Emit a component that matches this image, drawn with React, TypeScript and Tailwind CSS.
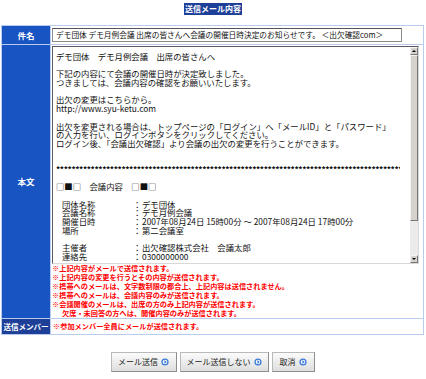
const font = "font-['Noto_Sans_CJK_JP','Noto_Sans_CJK_SC',sans-serif]";

const bodyLines = [
  'デモ団体　デモ月例会議　出席の皆さんへ',
  '',
  '下記の内容にて会議の開催日時が決定致しました。',
  'つきましては、会議内容の確認をお願いいたします。',
  '',
  '出欠の変更はこちらから。',
  'http://www.syu-ketu.com',
  '',
  '出欠を変更される場合は、トップページの「ログイン」へ「メールID」と「パスワード」',
  'の入力を行い、ログインボタンをクリックしてください。',
  'ログイン後、「会議出欠確認」より会議の出欠の変更を行うことができます。',
  '',
  '',
];

const details: [string, string][] = [
  ['団体名称', 'デモ団体'],
  ['会議名称', 'デモ月例会議'],
  ['開催日時', '2007年08月24日 15時00分 ～ 2007年08月24日 17時00分'],
  ['場所', '第二会議室'],
];

const notes = [
  '※上記内容がメールで送信されます。',
  '※上記内容の変更を行うとその内容が送信されます。',
  '※携帯へのメールは、文字数制限の都合上、上記内容は送信されません。',
  '※携帯へのメールは、会議内容のみが送信されます。',
  '※会議開催のメールは、出席の方のみ上記内容が送信されます。',
];

function Row({ k, v }: { k: string; v: string }) {
  return (
    <div className="flex h-[8.7px] items-center pl-[6px]">
      <span className="w-[71px]">{k}</span>
      <span className="w-[9px]">：</span>
      <span>{v}</span>
    </div>
  );
}

function GoIcon() {
  return (
    <svg width="8" height="8" viewBox="0 0 8 8" className="ml-[3px]">
      <circle cx="4" cy="4" r="3.6" fill="#3b7ad6" />
      <circle cx="4" cy="4" r="2.3" fill="#ffffff" />
      <path d="M3.3 2.6 L4.9 4 L3.3 5.4" fill="none" stroke="#3b7ad6" strokeWidth="1.1" />
    </svg>
  );
}

function Btn({ label, w }: { label: string; w: string }) {
  return (
    <button
      className={`${w} h-[20px] flex items-center justify-center border border-[#b9b9b9] border-b-[#8e8e8e] border-r-[#8e8e8e] bg-gradient-to-b from-[#fbfbfb] to-[#dedede] text-[8px] text-[#222]`}
    >
      {label}
      <GoIcon />
    </button>
  );
}

export default function App() {
  return (
    <div className={`w-[426px] h-[379px] bg-white ${font} text-[#111]`}>
      <div className="flex justify-center pt-[3px]">
        <div className="h-[12px] px-[1px] bg-[#1e3f98] text-white text-[8px] font-bold leading-[12px]">
          送信メール内容
        </div>
      </div>

      <div className="mt-[10px] ml-[1px] w-[423px] grid grid-cols-[48px_1fr] gap-[1px] p-[1px] bg-[#b9cced]">
        {/* 件名 */}
        <div className="h-[18px] bg-[#1854c2] text-white text-[8.5px] font-bold flex items-center justify-center">
          件名
        </div>
        <div className="bg-white flex items-center pl-[1px]">
          <div className="w-[350px] h-[14px] border border-[#8a8a8a] border-t-[#555] flex items-center pl-[3px] text-[7.7px] whitespace-nowrap overflow-hidden">
            デモ団体 デモ月例会議 出席の皆さんへ会議の開催日時決定のお知らせです。 ＜出欠確認com＞
          </div>
        </div>

        {/* 本文 */}
        <div className="h-[273px] bg-[#1854c2] text-white text-[8.5px] font-bold flex items-center justify-center">
          本文
        </div>
        <div className="bg-white pl-[1px] pt-[1px]">
          <div className="w-[367px] h-[218px] flex border-t border-l border-[#5a5a5a] border-r border-b border-r-[#d8d8d8] border-b-[#d8d8d8]">
            <div className="flex-1 overflow-hidden pl-[3px] pt-[5px] text-[8.4px] leading-[8.7px] whitespace-pre">
              {bodyLines.map((l, i) => (
                <div key={i} className="h-[8.7px]">{l}</div>
              ))}
              <div className="h-[8.7px] w-[344px] overflow-hidden font-bold tracking-[-0.4px]">
                {'*'.repeat(110)}
              </div>
              <div className="h-[8.7px]" />
              <div className="h-[8.7px]">□■□　会議内容　□■□</div>
              <div className="h-[8.7px]" />
              {details.map(([k, v]) => (
                <Row key={k} k={k} v={v} />
              ))}
              <div className="h-[8.7px]" />
              <Row k="主催者" v="出欠確認株式会社　会議太郎" />
              <Row k="連絡先" v="0300000000" />
            </div>
            <div className="w-[8px] flex flex-col bg-[#ebebeb]">
              <div className="h-[8px] bg-[#d6d3ce] border border-[#f4f4f4] border-b-[#777] border-r-[#777] flex items-center justify-center">
                <div className="w-0 h-0 border-l-[2px] border-r-[2px] border-b-[2px] border-l-transparent border-r-transparent border-b-black" />
              </div>
              <div className="h-[166px] bg-[#d6d3ce] border border-[#f4f4f4] border-b-[#777] border-r-[#777]" />
              <div className="flex-1" />
              <div className="h-[8px] bg-[#d6d3ce] border border-[#f4f4f4] border-b-[#777] border-r-[#777] flex items-center justify-center">
                <div className="w-0 h-0 border-l-[2px] border-r-[2px] border-t-[2px] border-l-transparent border-r-transparent border-t-black" />
              </div>
            </div>
          </div>
          <div className="text-[7.2px] leading-[9px] font-bold text-[#f00] whitespace-pre">
            {notes.map((n) => (
              <div key={n}>{n}</div>
            ))}
            <div className="pl-[10px]">欠席・未回答の方へは、開催内容のみが送信されます。</div>
          </div>
        </div>

        {/* 送信メンバー */}
        <div className="h-[15px] bg-[#1e3f98] text-white text-[7.5px] font-bold flex items-center justify-center whitespace-nowrap">
          送信メンバー
        </div>
        <div className="bg-white flex items-center pl-[2px] text-[7.2px] font-bold text-[#f00]">
          ※参加メンバー全員にメールが送信されます。
        </div>
      </div>

      <div className="mt-[17px] flex justify-center gap-[3px] pr-[1px]">
        <Btn label="メール送信" w="w-[66px]" />
        <Btn label="メール送信しない" w="w-[89px]" />
        <Btn label="取消" w="w-[43px]" />
      </div>
    </div>
  );
}
